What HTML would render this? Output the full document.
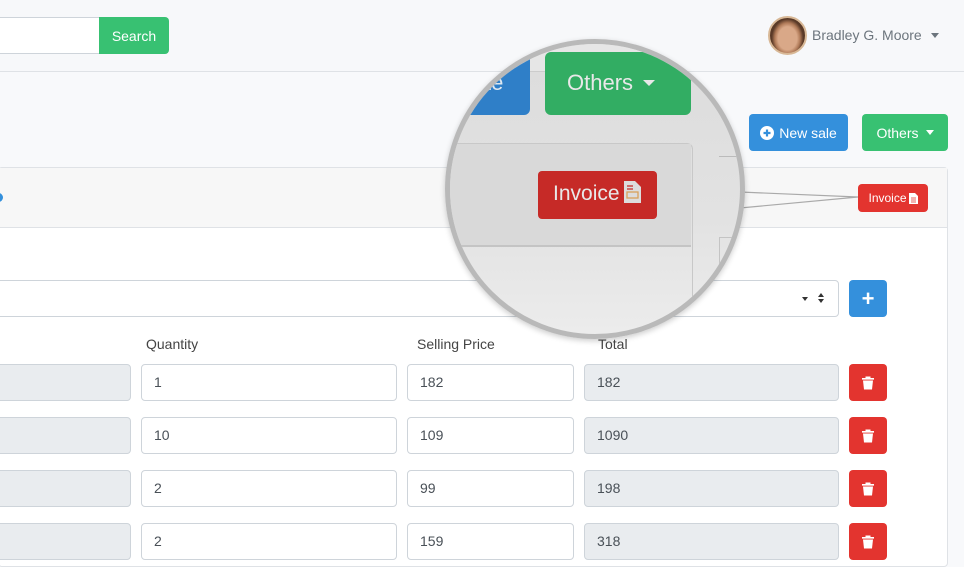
<!DOCTYPE html>
<html><head><meta charset="utf-8"><style>
*{box-sizing:border-box;margin:0;padding:0}
body{width:964px;height:554px;overflow:hidden;background:#f8f9fb;font-family:"Liberation Sans",sans-serif;position:relative;color:#495057}
.a{position:absolute}
.inp{position:absolute;height:37px;border:1px solid #ced4da;border-radius:4px;background:#fff;font-size:14px;padding:9px 12px;color:#495057}
.ro{background:#e9ecef}
.btn{position:absolute;border-radius:4px;color:#fff;font-size:14px;display:flex;align-items:center;justify-content:center}
.del{background:#e3342f;width:38px;height:37px}
.lbl{position:absolute;font-size:14px;color:#444;top:336px}
</style></head><body>
<div class="a" style="left:0;top:0;width:964px;height:72px;background:#f7f8fa;border-bottom:1px solid #dfe2e6"></div>
<div class="a" style="left:-10px;top:17px;width:110px;height:37px;background:#fff;border:1px solid #ced4da;border-right:none"></div>
<div class="btn" style="left:99px;top:17px;width:70px;height:37px;background:#38c172;border-radius:0 4px 4px 0">Search</div>
<div class="a" style="left:768px;top:16px;width:39px;height:39px;border-radius:50%;background:radial-gradient(ellipse 45% 55% at 50% 58%,#d9a888 0 60%,#b07a58 80%,#5a3a28 100%);border:2px solid #d8b896"></div>
<div class="a" style="left:812px;top:27px;font-size:14px;color:#6c757d">Bradley G. Moore</div>
<div class="a" style="left:931px;top:33px;border:4px solid transparent;border-top:5px solid #6c757d;border-bottom:none"></div>

<div class="btn" style="left:749px;top:114px;width:99px;height:37px;background:#3490dc"><svg width="14" height="14" viewBox="0 0 14 14" style="margin-right:5px"><circle cx="7" cy="7" r="7" fill="#fff"/><path d="M7 3.5v7M3.5 7h7" stroke="#3490dc" stroke-width="2.2"/></svg>New sale</div>
<div class="btn" style="left:862px;top:114px;width:86px;height:37px;background:#38c172">Others<span style="margin-left:7px;border:4px solid transparent;border-top:5px solid #fff;border-bottom:none"></span></div>

<div class="a" style="left:-2px;top:167px;width:950px;height:400px;background:#fff;border:1px solid #dfe2e6;border-radius:4px"></div>
<div class="a" style="left:-1px;top:168px;width:948px;height:60px;background:#f7f7f7;border-bottom:1px solid #dfe2e6"></div>
<div class="a" style="left:-6px;top:193px;width:9px;height:9px;border-radius:50%;background:#3490dc"></div>
<div class="btn" style="left:858px;top:184px;width:70px;height:28px;background:#e3342f;font-size:12px">Invoice<svg width="9" height="11" viewBox="0 0 9 11" style="margin-left:2px"><path d="M0 0h6l3 3v8H0z" fill="#fff"/><path d="M2 5h5M2 7h5M2 9h5" stroke="#e3342f" stroke-width=".8"/></svg></div>

<div class="inp" style="left:-10px;top:280px;width:849px"></div>
<div class="a" style="left:802px;top:297px;border:3.5px solid transparent;border-top:4px solid #333;border-bottom:none"></div>
<div class="a" style="left:818px;top:293px;border:3.5px solid transparent;border-bottom:4px solid #333;border-top:none"></div>
<div class="a" style="left:818px;top:299px;border:3.5px solid transparent;border-top:4px solid #333;border-bottom:none"></div>
<div class="btn" style="left:849px;top:280px;width:38px;height:37px;background:#3490dc;font-size:22px;font-weight:bold">+</div>

<div class="lbl" style="left:146px">Quantity</div>
<div class="lbl" style="left:417px">Selling Price</div>
<div class="lbl" style="left:598px">Total</div>

<div class="inp ro" style="left:-10px;top:364px;width:141px"></div><div class="inp" style="left:141px;top:364px;width:256px">1</div><div class="inp" style="left:407px;top:364px;width:167px">182</div><div class="inp ro" style="left:584px;top:364px;width:255px">182</div>
<div class="inp ro" style="left:-10px;top:417px;width:141px"></div><div class="inp" style="left:141px;top:417px;width:256px">10</div><div class="inp" style="left:407px;top:417px;width:167px">109</div><div class="inp ro" style="left:584px;top:417px;width:255px">1090</div>
<div class="inp ro" style="left:-10px;top:470px;width:141px"></div><div class="inp" style="left:141px;top:470px;width:256px">2</div><div class="inp" style="left:407px;top:470px;width:167px">99</div><div class="inp ro" style="left:584px;top:470px;width:255px">198</div>
<div class="inp ro" style="left:-10px;top:523px;width:141px"></div><div class="inp" style="left:141px;top:523px;width:256px">2</div><div class="inp" style="left:407px;top:523px;width:167px">159</div><div class="inp ro" style="left:584px;top:523px;width:255px">318</div>

<svg class="a" style="left:0;top:0" width="0" height="0"><defs><g id="tr"><path d="M-6-5h12v1.6H-6zM-2.5-6.5h5v1.5h-5zM-5-2.5h10l-1 9h-8z" fill="#fff"/></g></defs></svg>
<div class="btn del" style="left:849px;top:364px"><svg width="14" height="16" viewBox="-7 -8 14 16"><use href="#tr"/></svg></div>
<div class="btn del" style="left:849px;top:417px"><svg width="14" height="16" viewBox="-7 -8 14 16"><use href="#tr"/></svg></div>
<div class="btn del" style="left:849px;top:470px"><svg width="14" height="16" viewBox="-7 -8 14 16"><use href="#tr"/></svg></div>
<div class="btn del" style="left:849px;top:523px"><svg width="14" height="16" viewBox="-7 -8 14 16"><use href="#tr"/></svg></div>

<svg class="a" style="left:0;top:0" width="964" height="554"><path d="M740 192L858 197M740 208L858 197" stroke="#aaa" stroke-width="1.2" fill="none"/></svg>

<div class="a" style="left:445px;top:39px;width:300px;height:300px;border-radius:50%;border:5px solid #b9b9b9;overflow:hidden;background:linear-gradient(#dcdcdc,#e2e2e2 60%,#ececec);box-shadow:0 2px 6px rgba(0,0,0,.2)">
 <div class="a" style="left:-5px;top:-5px;width:300px;height:300px">
  <div class="a" style="left:0;top:0;width:300px;height:33px;background:#e6e6e6;border-bottom:1px solid #ccc"></div>
  <div class="a" style="left:-20px;top:13px;width:105px;height:63px;background:#2f7fc8;border-radius:6px;color:#dfe8f0;font-size:22px;padding:18px 0 0 60px">te</div>
  <div class="a" style="left:100px;top:13px;width:146px;height:63px;background:#32ad63;border-radius:6px;color:#e8e8e8;font-size:22px;padding:18px 0 0 22px">Others<span style="display:inline-block;margin-left:10px;vertical-align:4px;border:6px solid transparent;border-top:6px solid #e8e8e8;border-bottom:none"></span></div>
  <div class="a" style="left:0;top:104px;width:248px;height:300px;border:1px solid #c8c8c8;border-left:none;border-radius:0 6px 0 0"></div>
  <div class="a" style="left:0;top:105px;width:246px;height:103px;background:#d9d9d9;border-bottom:2px solid #c4c4c4"></div>
  <div class="a" style="left:93px;top:132px;width:119px;height:48px;background:#c62a27;border-radius:4px;color:#e8e8e8;font-size:21px;padding:10px 0 0 15px">Invoice<svg width="17" height="22" viewBox="0 0 17 22" style="margin-left:4px;vertical-align:-3px"><path d="M0 0h11l6 6v16H0z" fill="#ddd"/><path d="M3 5h6M3 8h6" stroke="#c62a27" stroke-width="1.3"/><rect x="3" y="11" width="11" height="6" fill="none" stroke="#d9a25a" stroke-width="1.3"/></svg></div>
  <div class="a" style="left:274px;top:117px;width:30px;height:1px;background:#bbb"></div>
  <div class="a" style="left:274px;top:198px;width:30px;height:120px;border:1px solid #c4c4c4;border-right:none"></div>
 </div>
</div>
</body></html>
